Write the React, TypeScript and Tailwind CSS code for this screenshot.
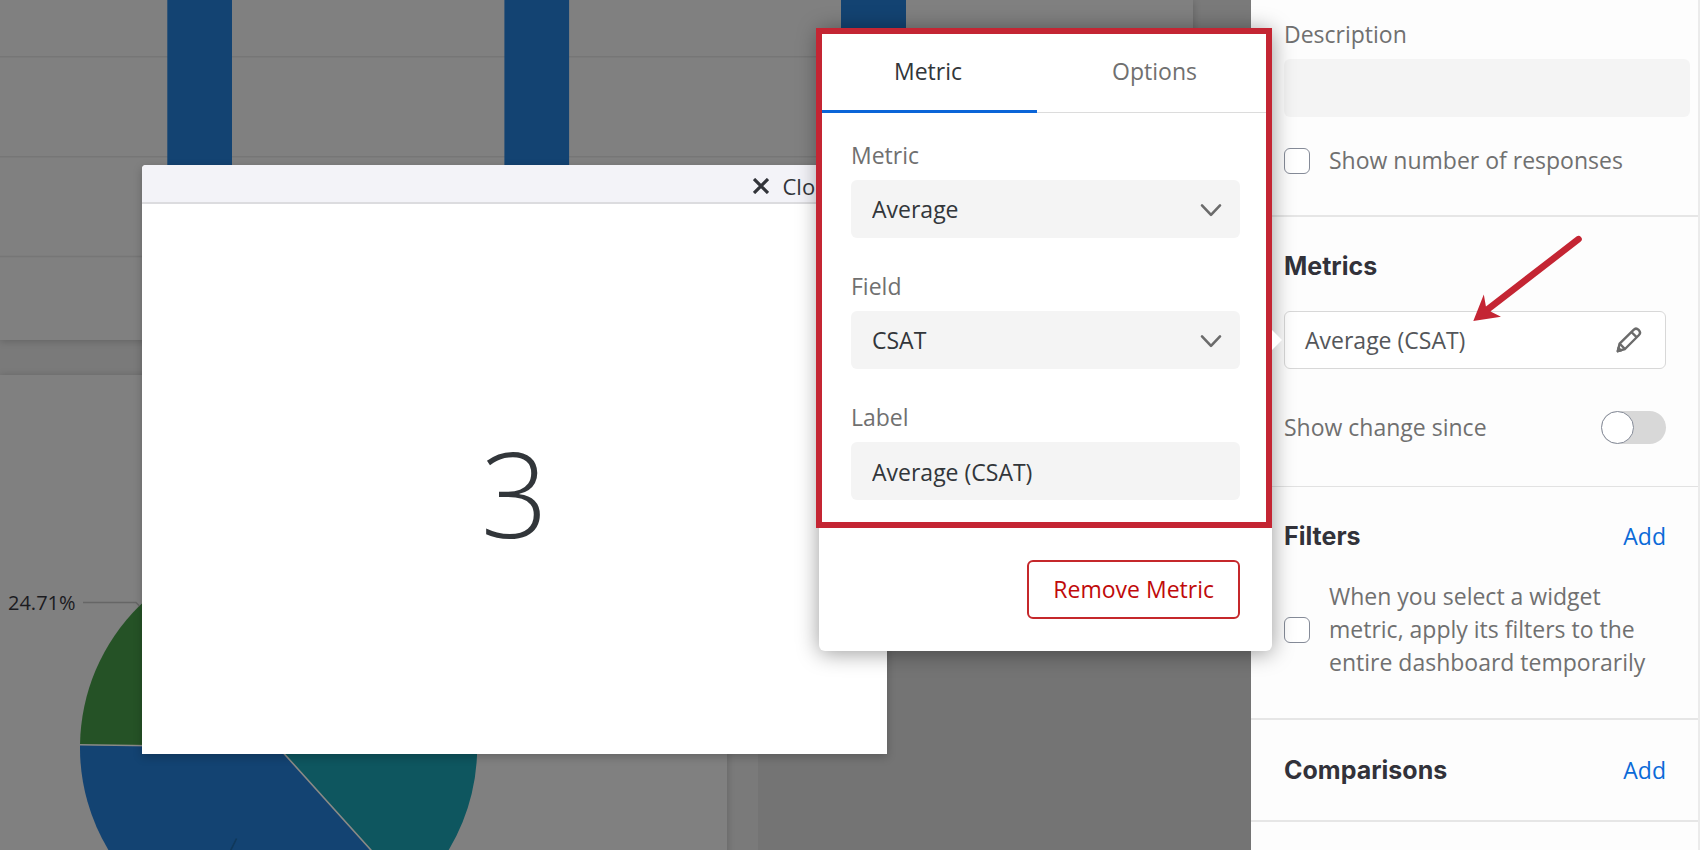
import React, { useState } from "react";

function BarChartCard() {
  return (
    <section className="w-[1193px] max-w-full bg-[#808080] shadow-[0_1px_8px_rgba(0,0,0,0.2)]">
      <svg className="block" width="1193" height="340" viewBox="0 0 1193 340" role="img" aria-label="Bar chart">
        <g stroke="#767676" strokeWidth="1.5">
          <line x1="0" x2="1193" y1="56.75" y2="56.75" />
          <line x1="0" x2="1193" y1="156.75" y2="156.75" />
          <line x1="0" x2="1193" y1="256.5" y2="256.5" />
        </g>
        <g fill="#134372">
          <rect x="167.3" y="0" width="64.7" height="340" />
          <rect x="504.4" y="0" width="64.7" height="340" />
          <rect x="841" y="0" width="65" height="340" />
        </g>
      </svg>
    </section>
  );
}

function PieChartCard() {
  return (
    <section className="w-[727px] max-w-full bg-[#808080] shadow-[0_1px_8px_rgba(0,0,0,0.2)]">
      <svg className="block" width="727" height="600" viewBox="0 375 727 600" role="img" aria-label="Pie chart">
        <path d="M278.5 747.5 L80 745 A198.5 198.5 0 0 1 278.5 549 Z" fill="#255226" />
        <path d="M278.5 747.5 L278.5 549 A198.5 198.5 0 0 1 411.5 895 Z" fill="#0e565f" />
        <path d="M278.5 747.5 L411.5 895 A198.5 198.5 0 0 1 80 745 Z" fill="#134372" />
        <path d="M80 744.8 L278.5 747.5 L411.5 895" fill="none" stroke="#8a8a86" strokeWidth="1.6" />
        <path d="M83 602.5 H136 L139.5 606" fill="none" stroke="#666" strokeWidth="1.4" />
        <path d="M236.5 838.5 L226 860" fill="none" stroke="#10385a" strokeWidth="1.6" />
        <text x="8" y="609.5" fontSize="20" fill="#1b1b1f">
          24.71%
        </text>
      </svg>
    </section>
  );
}

function PreviewDialog() {
  return (
    <div
      role="dialog"
      aria-label="Widget preview"
      className="absolute left-[142px] top-[165px] flex h-[589px] w-[745px] flex-col rounded-t-[4px] bg-white shadow-[0_3px_10px_rgba(0,0,0,0.22)]"
    >
      <header className="flex h-[39px] shrink-0 items-center justify-end rounded-t-[4px] border-b-2 border-[#dcdcdf] bg-[#f3f3f8] pr-[49px] pt-1">
        <button type="button" className="flex items-center gap-[14px] text-[22px] leading-[30px] text-[#32363a]">
          <svg width="16" height="16" viewBox="0 0 16 16" fill="none" stroke="#32343a" strokeWidth="3.2" aria-hidden="true">
            <path d="M1 1 L15 15 M15 1 L1 15" />
          </svg>
          Close
        </button>
      </header>
      <div className="flex flex-1 items-center justify-center pt-7">
        <span className="text-[118px] font-light leading-none text-[#32363a]">3</span>
      </div>
    </div>
  );
}

function SelectField({ id, label, options }: { id: string; label: string; options: string[] }) {
  return (
    <div className="flex flex-col gap-2">
      <label htmlFor={id} className="text-[#707070]">
        {label}
      </label>
      <div className="relative">
        <select
          id={id}
          className="h-[58px] w-full appearance-none rounded-[6px] bg-[#f4f4f4] px-[21px] pt-px text-[#32363a] outline-none"
        >
          {options.map((o) => (
            <option key={o}>{o}</option>
          ))}
        </select>
        <svg
          className="pointer-events-none absolute right-[18px] top-[23px]"
          width="22"
          height="14"
          viewBox="0 0 22 14"
          fill="none"
          stroke="#6b6b6b"
          strokeWidth="2.6"
          strokeLinecap="round"
          strokeLinejoin="round"
          aria-hidden="true"
        >
          <path d="M2 2.4 L11 11.8 L20 2.4" />
        </svg>
      </div>
    </div>
  );
}

function MetricPopup() {
  const [tab, setTab] = useState("Metric");
  return (
    <div className="absolute right-[426px] top-7 w-[453px] rounded-[6px] bg-white shadow-[0_2px_22px_rgba(0,0,0,0.4)]">
      <svg className="absolute left-full top-[302px]" width="10" height="20" viewBox="0 0 10 20" aria-hidden="true">
        <path d="M0 0 L10 10 L0 20 Z" fill="#fff" />
      </svg>
      <div role="tablist" className="flex h-[85px] border-b border-[#dcdcdc]">
        {["Metric", "Options"].map((t) => (
          <button
            key={t}
            role="tab"
            type="button"
            aria-selected={tab === t}
            onClick={() => setTab(t)}
            className={
              tab === t
                ? "-mb-px flex-auto border-b-[3px] border-[#0b65d8] pt-1 text-[#32363a]"
                : "-mb-px flex-auto border-b-[3px] border-transparent pt-1 text-[#707070]"
            }
          >
            {t}
          </button>
        ))}
      </div>
      <div className="flex flex-col gap-8 px-8 pt-[26px]">
        <SelectField id="metric" label="Metric" options={["Average", "Count"]} />
        <SelectField id="field" label="Field" options={["CSAT"]} />
        <div className="flex flex-col gap-2">
          <label htmlFor="label" className="text-[#707070]">
            Label
          </label>
          <input
            id="label"
            defaultValue="Average (CSAT)"
            className="h-[58px] w-full rounded-[6px] bg-[#f4f4f4] px-[21px] pt-px text-[#32363a] outline-none"
          />
        </div>
      </div>
      <div className="flex justify-end px-8 pb-8 pt-[60px]">
        <button type="button" className="h-[59px] rounded-[6px] border-2 border-[#c5282b] px-6 text-[#c00a0a]">
          Remove Metric
        </button>
      </div>
      <div className="pointer-events-none absolute -left-[3px] right-0 top-0 h-[500px] border-[6px] border-[#c42533]" />
    </div>
  );
}

function CheckRow({ id, children }: { id: string; children: React.ReactNode }) {
  return (
    <div className="flex items-center gap-[19px]">
      <input
        id={id}
        type="checkbox"
        className="h-[26px] w-[26px] shrink-0 appearance-none rounded-[6px] border border-[#858b98] bg-white"
      />
      <label htmlFor={id} className="text-[#707070]">
        {children}
      </label>
    </div>
  );
}

function Heading({ title, add }: { title: string; add?: boolean }) {
  return (
    <div className="flex items-center justify-between">
      <h2 className="font-['Inter',sans-serif] text-[25px] font-bold text-[#32323a]">{title}</h2>
      {add && (
        <button type="button" className="text-[#0b6ad8]">
          Add
        </button>
      )}
    </div>
  );
}

function Sidebar() {
  return (
    <aside className="relative w-[449px] shrink-0 border-r-2 border-[#ebebeb] bg-[#fdfdfd]">
      <section className="flex flex-col border-b-2 border-[#e6e6e6] pb-[38px] pl-[33px] pr-2 pt-[18px]">
        <label htmlFor="description" className="mb-2 text-[#707070]">
          Description
        </label>
        <input id="description" className="mb-[27px] h-[58px] rounded-[6px] bg-[#f4f4f4] px-5 outline-none" />
        <CheckRow id="responses">Show number of responses</CheckRow>
      </section>
      <section className="border-b border-[#e2e2e2] pb-[42px] pl-[33px] pr-8 pt-[33px]">
        <Heading title="Metrics" />
        <button
          type="button"
          className="mt-7 flex h-[58px] w-full items-center justify-between rounded-[6px] border border-[#d8d8d8] bg-white pl-5 pr-[23px] text-[#54565a]"
        >
          Average (CSAT)
          <svg
            width="26"
            height="26"
            viewBox="0 0 26 26"
            fill="none"
            stroke="#6b6b6b"
            strokeWidth="2.4"
            strokeLinejoin="round"
            aria-hidden="true"
          >
            <path d="M1.8 24.2 L3.6 16.6 L17.6 2.8 C19 1.4 21 1.4 22.6 2.9 C24.2 4.5 24.4 6.6 23 8 L9 22 Z" />
            <path d="M15.4 5 L20.8 10.4 M3.6 16.6 L9 22" />
            <path d="M1.8 24.2 L2.5 21 L5 23.4 Z" fill="#6b6b6b" />
          </svg>
        </button>
        <div className="mt-[42px] flex items-center justify-between">
          <label htmlFor="change" className="text-[#707070]">
            Show change since
          </label>
          <span className="relative inline-flex h-[33px] w-[65px] rounded-full bg-[#d8d8d8]">
            <input id="change" type="checkbox" role="switch" className="peer absolute inset-0 m-0 appearance-none" />
            <span className="pointer-events-none h-[33px] w-[33px] rounded-full border border-[#858b98] bg-white peer-checked:translate-x-8" />
          </span>
        </div>
      </section>
      <section className="border-b-2 border-[#e6e6e6] pb-[39px] pl-[33px] pr-8 pt-[33px]">
        <Heading title="Filters" add />
        <div className="mt-[27px]">
          <CheckRow id="apply">When you select a widget metric, apply its filters to the entire dashboard temporarily</CheckRow>
        </div>
      </section>
      <section className="border-b-2 border-[#e6e6e6] pb-[33px] pl-[33px] pr-8 pt-[34px]">
        <Heading title="Comparisons" add />
      </section>
      <MetricPopup />
      <svg
        className="pointer-events-none absolute left-[222px] top-[235px]"
        width="112"
        height="88"
        viewBox="0 0 112 88"
        aria-hidden="true"
      >
        <path d="M105.5 4.2 L14 74.8" stroke="#c42533" strokeWidth="6.6" strokeLinecap="round" />
        <path d="M0.3 86 L10.8 59.5 L13.2 73 L18.5 77 L28 81.8 Z" fill="#c42533" />
      </svg>
    </aside>
  );
}

export default function App() {
  return (
    <div className="flex h-screen overflow-hidden bg-[#747474] font-['Open_Sans','Noto_Sans',sans-serif] text-[23px] leading-[33px]">
      <main className="relative min-w-0 flex-1">
        <div className="flex flex-col">
          <div className="bg-[#7a7a7a] pb-[35px]">
            <BarChartCard />
          </div>
          <div className="w-[758px] max-w-full bg-[#7a7a7a]">
            <PieChartCard />
          </div>
        </div>
        <PreviewDialog />
      </main>
      <Sidebar />
    </div>
  );
}
